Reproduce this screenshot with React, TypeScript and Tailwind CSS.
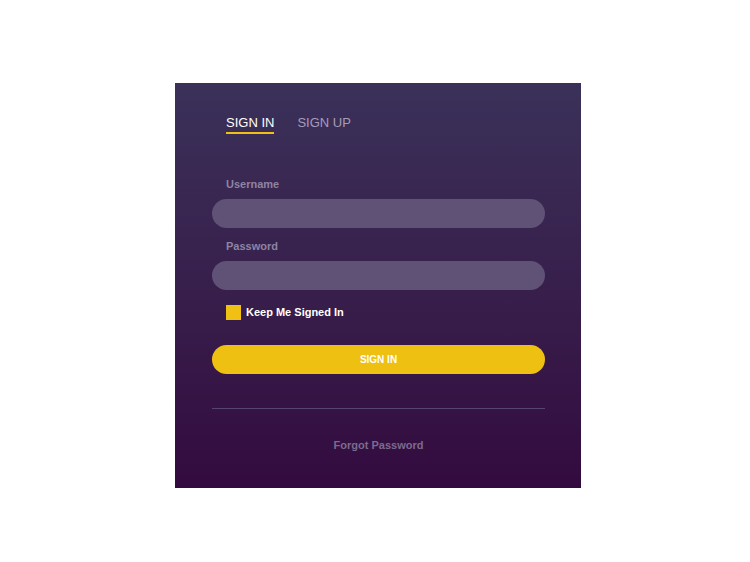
export default function App() {
  return (
    <div className="min-h-[562px] w-[750px] bg-white pl-[175px] pt-[83px] font-['Liberation_Sans',Arial,sans-serif]">
      <div className="h-[405px] w-[406px] bg-gradient-to-b from-[#3a3159] to-[#330a3f] pt-[32px]">
        <div className="flex gap-[23px] pl-[51px]">
          <div className="border-b-2 border-[#f0c014] pb-[1px] text-[13px] leading-[16px] text-white">SIGN IN</div>
          <div className="pb-[1px] text-[13px] leading-[16px] text-[#a59cbb]">SIGN UP</div>
        </div>

        <div className="pl-[37px] pr-[36px]">
          <div className="mt-[44px] pl-[14px] text-[11px] font-bold leading-[13px] text-[#8e83a3]">Username</div>
          <input className="mt-[8px] block h-[29px] w-full rounded-full bg-[#605177] px-[14px] text-[12px] text-white outline-none" />

          <div className="mt-[12px] pl-[14px] text-[11px] font-bold leading-[13px] text-[#8e83a3]">Password</div>
          <input type="password" className="mt-[8px] block h-[29px] w-full rounded-full bg-[#605177] px-[14px] text-[12px] text-white outline-none" />

          <label className="mt-[15px] flex h-[15px] items-center gap-[5px] pl-[14px]">
            <span className="h-[15px] w-[15px] bg-[#f0c014]" />
            <span className="text-[11px] font-bold leading-[13px] text-white">Keep Me Signed In</span>
          </label>

          <button className="mt-[25px] block h-[29px] w-full rounded-full bg-[#eec011] text-[10px] font-bold text-white">
            SIGN IN
          </button>

          <div className="mt-[34px] h-px bg-[#54446e]" />

          <div className="mt-[30px] text-center text-[11px] font-bold leading-[13px] text-[#7b6b8f]">Forgot Password</div>
        </div>
      </div>
    </div>
  );
}
